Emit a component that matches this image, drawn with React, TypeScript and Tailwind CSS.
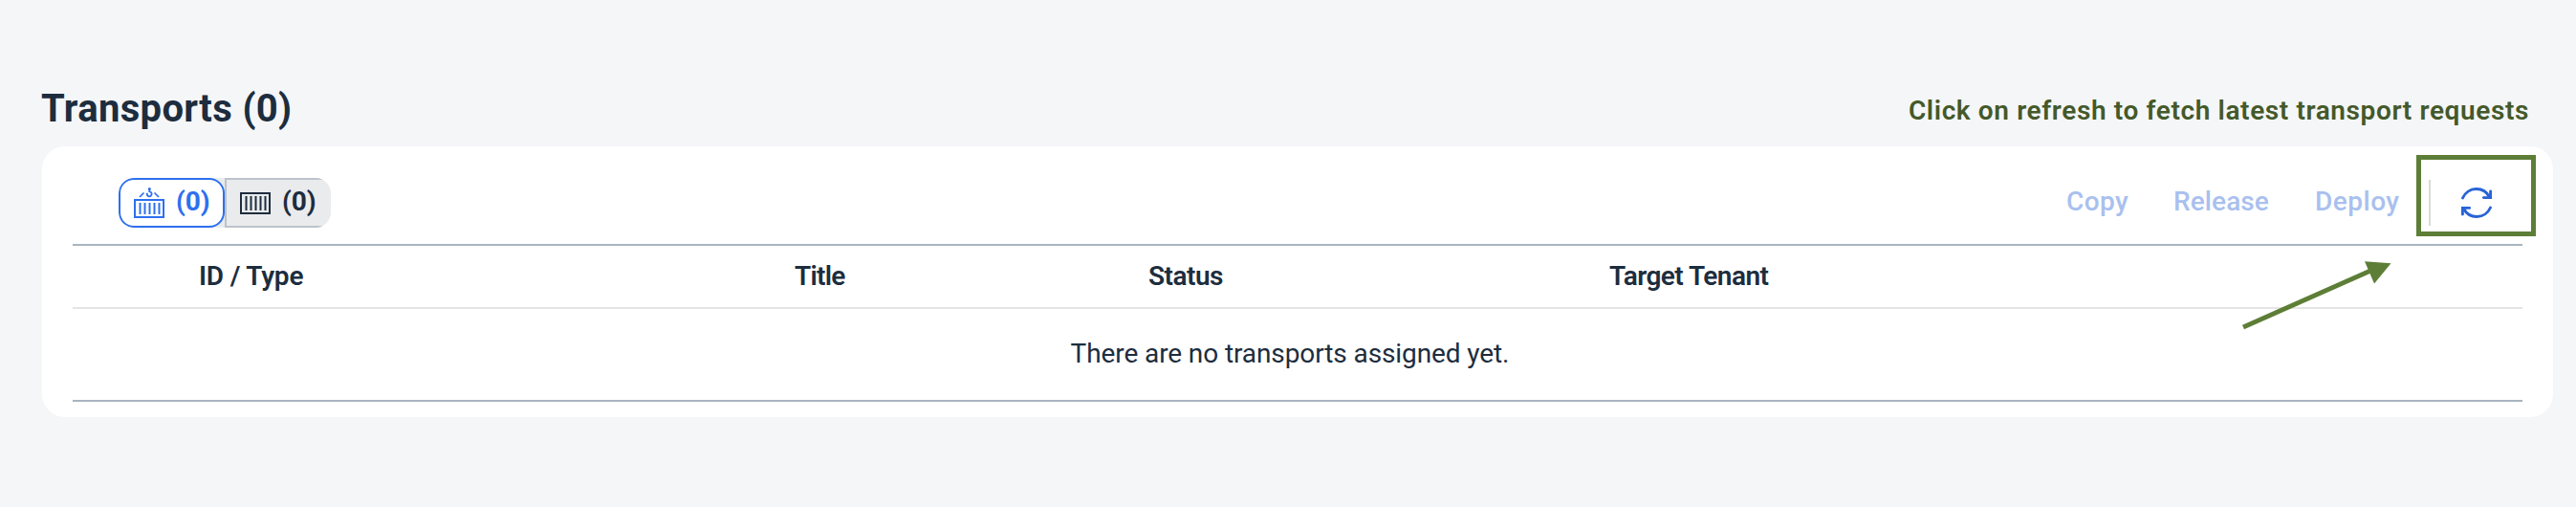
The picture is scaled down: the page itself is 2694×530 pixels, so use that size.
function HookContainerIcon() {
  return (
    <svg className="block h-8 w-8" width="32" height="32" viewBox="0 0 32 32" fill="none" stroke="currentColor">
      <rect x="1" y="13" width="30" height="18" strokeWidth="2" />
      <path d="M6.500 16v12M11.500 16v12M16.500 16v12M21.500 16v12M26.500 16v12" strokeWidth="2" />
      <path d="M6 10l4.500-4.500M26 10l-4.500-4.500" strokeWidth="1.700" />
      <circle cx="16.300" cy="1.600" r="1.500" fill="currentColor" stroke="none" />
      <path d="M16.300 2v2.200c2.200 .6 2.600 2 2.200 3.400a2.400 2.400 0 0 1-4.700-.8V5.800" strokeWidth="1.800" />
    </svg>
  );
}

function ContainerIcon() {
  return (
    <svg className="block h-8 w-8" width="32" height="32" viewBox="0 0 32 32" fill="none" stroke="currentColor">
      <rect x="1" y="6" width="30" height="21" strokeWidth="2" />
      <path d="M6.500 9v15M11.500 9v15M16.500 9v15M21.500 9v15M26.500 9v15" strokeWidth="2" />
    </svg>
  );
}

function RefreshIcon() {
  return (
    <svg
      className="block h-8 w-8"
      width="32"
      height="32"
      viewBox="0 0 32 32"
      fill="none"
      stroke="currentColor"
      strokeWidth="2.900"
      strokeLinecap="round"
    >
      <path d="M1.500 11C4 5.300 9.500 1.500 15.600 1.500C21.800 1.500 27 5 29.500 10" />
      <path d="M30.600 4v6.600h-7.200" />
      <path d="M30.500 21C28 26.700 22.500 30.500 16.400 30.500C10.200 30.500 5 27 2.500 22" />
      <path d="M1.400 28v-6.600h7.200" />
    </svg>
  );
}

export default function App() {
  return (
    <main className="relative h-[530px] w-full overflow-hidden bg-[#f5f6f8] pr-6 pl-11 font-['Roboto',sans-serif] text-[28px] text-[#1d2d3e]">
      <header className="flex h-[153px] items-start justify-between pt-[93px] pr-[25px]">
        <h1 className="mt-px -ml-px text-[40px] leading-10 font-bold tracking-[0.35px]">Transports (0)</h1>
        <p className="mt-[3px] leading-10 font-semibold tracking-[0.62px] text-[#44592a]">
          Click on refresh to fetch latest transport requests
        </p>
      </header>

      <section className="h-[283px] rounded-[24px] bg-white px-8 pt-[33px]">
        <div className="flex h-[71px] items-start justify-between border-b-2 border-[#a9b4be] pl-12">
          <div className="flex h-[52px] overflow-hidden rounded-[16px] bg-[#eaebed] font-bold">
            <button className="flex w-[111px] items-center gap-3 rounded-[16px] border-2 border-[#2e70ee] bg-white pl-3.5 text-[#2e70ee]">
              <HookContainerIcon />
              <span className="-mt-0.5">(0)</span>
            </button>
            <button className="flex w-[111px] items-center gap-3 border-2 border-r-0 border-[#bcc3ca] pl-3.5">
              <ContainerIcon />
              <span className="-mt-0.5">(0)</span>
            </button>
          </div>

          <div className="flex h-[52px] items-center pr-8 font-medium text-[#a9c0ef]">
            <button className="-mt-0.5 w-[113px] pl-px text-left tracking-[0.4px]">Copy</button>
            <button className="-mt-0.5 w-[147px] text-left tracking-[0.1px]">Release</button>
            <button className="-mt-0.5 w-[120px] pl-px text-left tracking-[0.5px]">Deploy</button>
            <span className="h-12 w-0.5 bg-[#d9d9d9]" />
            <button className="ml-8 text-[#2863d6]">
              <RefreshIcon />
            </button>
          </div>
        </div>

        <div className="flex h-[66px] items-center border-b-2 border-[#e5e5e5] pb-px pl-[132px] font-semibold">
          <span className="w-[623px] tracking-[-0.2px]">ID / Type</span>
          <span className="w-[370px] tracking-[-0.75px]">Title</span>
          <span className="w-[482px] tracking-[-0.5px]">Status</span>
          <span className="tracking-[-0.55px]">Target Tenant</span>
        </div>

        <div className="flex h-[97px] items-center justify-center border-b-2 border-[#a9b4be] pb-px">
          <p className="relative -left-2 tracking-[-0.1px]">There are no transports assigned yet.</p>
        </div>
      </section>

      <div className="absolute top-[162px] left-[2527px] h-[85px] w-[125px] border-5 border-[#5d7e36]" />
      <svg className="absolute top-[266px] left-[2336px]" width="172" height="88" viewBox="0 0 172 88">
        <path d="M10 76L142 17.500" stroke="#5d7e36" strokeWidth="4.800" />
        <path d="M137 7.300L164.500 9.300L147 30.500Z" fill="#5d7e36" />
      </svg>
    </main>
  );
}
